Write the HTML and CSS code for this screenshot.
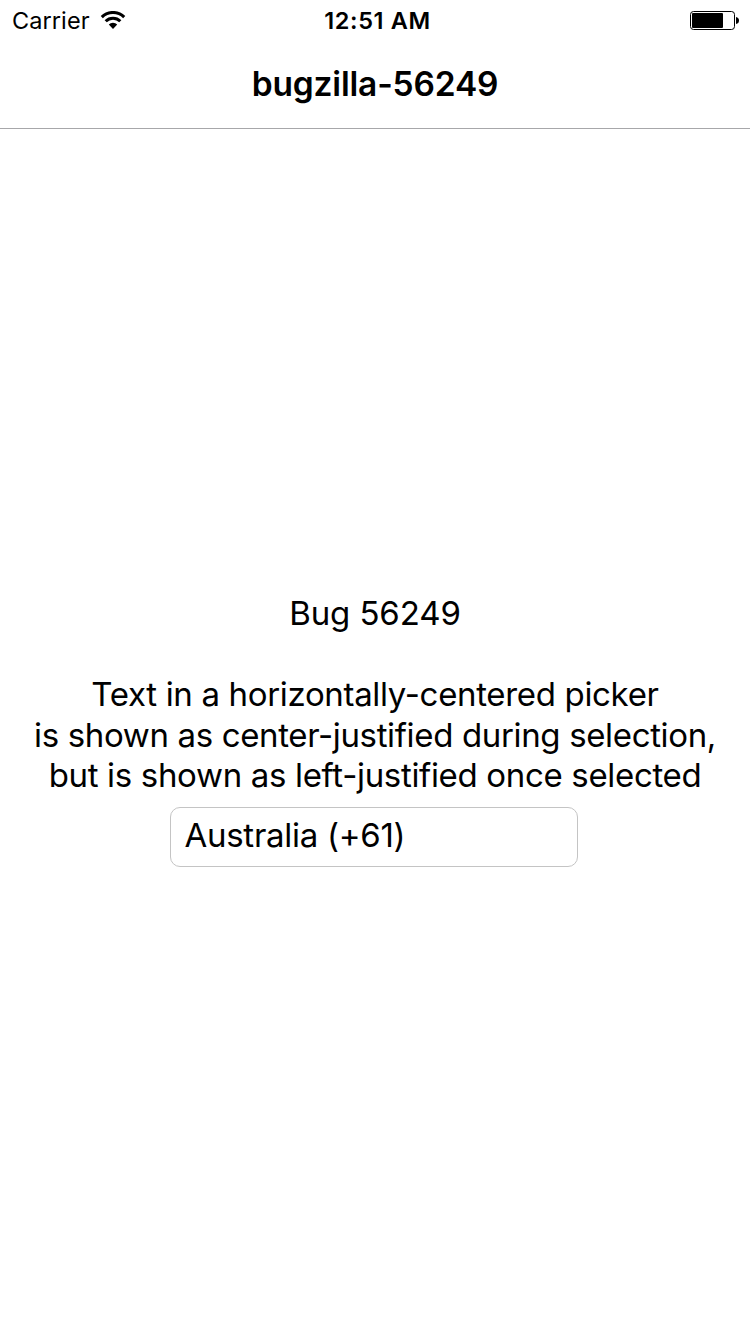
FILE: index.html
```
<!DOCTYPE html>
<html lang="en">
<head>
<meta charset="utf-8">
<title>bugzilla-56249</title>
<link rel="stylesheet" href="styles.css">
</head>
<body>
<header class="header">
  <div class="status">
    <div class="carrier"><span class="carrier-name">Carrier</span>
      <svg class="wifi" width="26" height="18" viewBox="0 0 26 18" fill="none" stroke="#000" stroke-width="3">
        <path d="M1.8 6.1a15.8 15.8 0 0 1 22.4 0"/>
        <path d="M5.7 10.3a10.3 10.3 0 0 1 14.6 0"/>
        <path d="M13 18l-4.2-4.4a5.9 5.9 0 0 1 8.4 0z" fill="#000" stroke="none"/>
      </svg>
    </div>
    <div class="time"><span class="time-text">12:51 AM</span></div>
    <div class="power">
      <svg class="battery" width="50" height="19" viewBox="0 0 50 19">
        <rect x="0.5" y="0.5" width="44" height="18" rx="3" fill="#fff" stroke="#000"/>
        <rect x="2" y="2" width="31" height="15" rx="1"/>
        <path d="M46 6q3 .5 3 3.5t-3 3.5z"/>
      </svg>
    </div>
  </div>
  <h1 class="title"><span class="title-text">bugzilla-56249</span></h1>
</header>
<main class="content">
  <p class="line"><span class="bug">Bug 56249</span></p>
  <p class="line gap"></p>
  <p class="line"><span class="l1">Text in a horizontally-centered picker</span></p>
  <p class="line"><span class="l2">is shown as center-justified during selection,</span></p>
  <p class="line"><span class="l3">but is shown as left-justified once selected</span></p>
  <div class="picker"><span class="value">Australia (+61)</span></div>
</main>
</body>
</html>
```
FILE: styles.css
```
* { box-sizing: border-box; }
body { margin: 0; width: 750px; height: 1334px; background: #fff; color: #000; font-family: Inter, "Liberation Sans", sans-serif; overflow: hidden; }
.header { height: 129px; border-bottom: 1px solid #a7a7aa; }
.status { height: 41px; padding-top: 1px; display: grid; grid-template-columns: 1fr 1fr 1fr; align-items: center; font-size: 23.5px; line-height: 40px; white-space: nowrap; }
.carrier { display: flex; align-items: center; gap: 10px; padding-left: 12px; }
.carrier-name { letter-spacing: 0.08px; }
.wifi, .battery { margin-bottom: 2px; }
.time { text-align: center; font-weight: 600; padding-left: 5px; letter-spacing: 0.65px; }
.power { display: flex; justify-content: flex-end; padding-right: 10px; }
.title { margin: 0; height: 88px; text-align: center; font-size: 33.5px; font-weight: 600; line-height: 86px; letter-spacing: -0.18px; }
.content { padding-top: 464px; text-align: center; font-size: 33px; }
.line { margin: 0; height: 40.5px; line-height: 40px; white-space: nowrap; }
.bug { letter-spacing: -0.1px; }
.l1, .l3 { letter-spacing: -0.33px; }
.l2 { letter-spacing: -0.35px; }
.picker { width: 408px; height: 60px; margin: 11px 0 0 170px; padding-left: 13.5px; border: 1px solid #c4c4c4; border-radius: 10px; text-align: left; line-height: 54px; }
.value { letter-spacing: -0.28px; }
```
